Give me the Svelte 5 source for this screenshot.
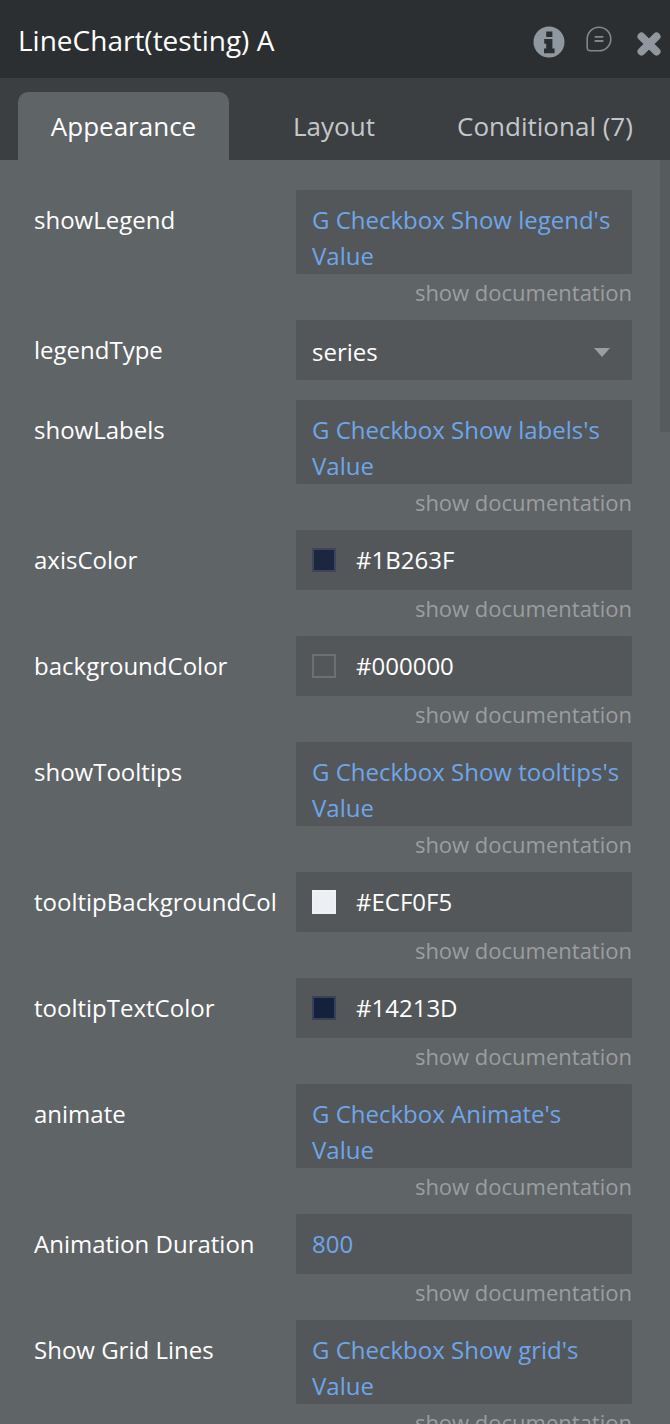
<script>
    const rows = [
        { label: "showLegend", type: "dyn", value: "G Checkbox Show legend's Value", doc: true },
        { label: "legendType", type: "select", value: "series", doc: false },
        { label: "showLabels", type: "dyn", value: "G Checkbox Show labels's Value", doc: true },
        { label: "axisColor", type: "color", value: "#1B263F", swatch: "#1b263f", doc: true },
        { label: "backgroundColor", type: "color", value: "#000000", swatch: "transparent", doc: true },
        { label: "showTooltips", type: "dyn", value: "G Checkbox Show tooltips's Value", doc: true },
        { label: "tooltipBackgroundCol", type: "color", value: "#ECF0F5", swatch: "#ecf0f5", doc: true },
        { label: "tooltipTextColor", type: "color", value: "#14213D", swatch: "#14213d", doc: true },
        { label: "animate", type: "dyn", value: "G Checkbox Animate's Value", doc: true },
        { label: "Animation Duration", type: "num", value: "800", doc: true },
        { label: "Show Grid Lines", type: "dyn", value: "G Checkbox Show grid's Value", doc: true }
    ];
</script>

<main>
    <header class="title-bar">
        <div class="title">LineChart(testing) A</div>
        <div class="icons">
            <svg class="ic-info" width="32" height="32" viewBox="0 0 32 32">
                <circle cx="16" cy="16" r="15.5" fill="#8f989f" />
                <path d="M13.2 5.5h6.2v5.4h-6.2zM11.2 13h8.2v9.6h2.2v4.7H11v-4.7h2.2v-4.9h-2z" fill="#2b2f32" />
            </svg>
            <svg class="ic-chat" width="26" height="26" viewBox="0 0 26 26">
                <path d="M1.2 13a11.8 11.8 0 1 1 11.8 11.8H4.5c-2 0-3.3-1.3-3.3-3.3z" fill="none" stroke="#7f888e" stroke-width="1.6" />
                <path d="M8.6 10.8h8.8M8.6 15h8.8" stroke="#7f888e" stroke-width="1.8" fill="none" />
            </svg>
            <svg class="ic-close" width="26" height="26" viewBox="0 0 26 26">
                <path d="M5.5 5.5L20.5 20.5M20.5 5.5L5.5 20.5" stroke="#8f989f" stroke-width="8" stroke-linecap="round" fill="none" />
            </svg>
        </div>
    </header>

    <nav class="tabs">
        <div class="tab active">Appearance</div>
        <div class="tab layout">Layout</div>
        <div class="tab conditional">Conditional (7)</div>
    </nav>

    <div class="content">
        <div class="scrollbar"></div>
        {#each rows as row}
            <div class="row" class:no-doc={!row.doc}>
                <div class="label">{row.label}</div>
                <div class="field-col">
                    <div class="field {row.type}">
                        {#if row.type === "color"}
                            <span class="swatch" style="background-color: {row.swatch}"></span>
                        {/if}
                        <span class="value">{row.value}</span>
                        {#if row.type === "select"}
                            <span class="caret"></span>
                        {/if}
                    </div>
                    {#if row.doc}
                        <div class="doc">show documentation</div>
                    {/if}
                </div>
            </div>
        {/each}
    </div>
</main>

<style>
    :global(body) {
        background: #5f6467;
    }
    main {
        width: 670px;
        height: 1424px;
        overflow: hidden;
        font-family: "Open Sans", sans-serif;
        background: #5f6467;
    }
    .title-bar {
        height: 78px;
        background: #2b2f32;
        display: flex;
        align-items: center;
        justify-content: space-between;
        padding: 6px 8px 0 18px;
        box-sizing: border-box;
    }
    .title {
        color: #fff;
        font-size: 28px;
        margin-top: -5px;
    }
    .icons {
        display: flex;
        align-items: center;
    }
    .ic-info {
        margin-right: 21px;
    }
    .ic-chat {
        margin-right: 24px;
        margin-bottom: 7px;
    }
    .ic-close {
        margin-top: 3px;
    }
    .tabs {
        height: 82px;
        background: #3b3f42;
        display: flex;
        align-items: flex-end;
        box-sizing: border-box;
    }
    .tab {
        height: 68px;
        display: flex;
        align-items: center;
        justify-content: center;
        font-size: 26px;
        color: #c4c7c9;
    }
    .tab.active {
        margin-left: 18px;
        width: 211px;
        background: #5f6467;
        border-radius: 10px 10px 0 0;
        color: #fff;
    }
    .tab.layout {
        width: 210px;
    }
    .tab.conditional {
        width: 212px;
    }
    .content {
        position: relative;
        padding: 30px 38px 0 34px;
    }
    .scrollbar {
        position: absolute;
        top: 0;
        right: 0;
        width: 10px;
        height: 272px;
        background: #565b5e;
    }
    .row {
        display: flex;
        margin-bottom: 20px;
    }
    .label {
        width: 262px;
        flex: none;
        color: #fff;
        font-size: 24px;
        line-height: 36px;
        padding-top: 12px;
        white-space: nowrap;
    }
    .field-col {
        width: 336px;
    }
    .field {
        background: #54575a;
        border-radius: 2px;
        padding: 12px 8px 0 16px;
        font-size: 24px;
        line-height: 36px;
        color: #fff;
        box-sizing: border-box;
    }
    .dyn,
    .num {
        color: #6ea6e8;
    }
    .select,
    .color,
    .num {
        display: flex;
        align-items: center;
        height: 60px;
        padding-top: 0;
    }
    .select {
        padding-top: 4px;
    }
    .select .value {
        flex: 1;
    }
    .caret {
        width: 0;
        height: 0;
        border-left: 8px solid transparent;
        border-right: 8px solid transparent;
        border-top: 9px solid #9b9d9f;
        margin-right: 14px;
    }
    .swatch {
        width: 24px;
        height: 24px;
        box-sizing: border-box;
        border: 2px solid rgba(255, 255, 255, 0.15);
        margin-right: 20px;
    }
    .doc {
        height: 26px;
        text-align: right;
        font-size: 22px;
        line-height: 36px;
        color: #9b9ea0;
        white-space: nowrap;
    }
</style>
